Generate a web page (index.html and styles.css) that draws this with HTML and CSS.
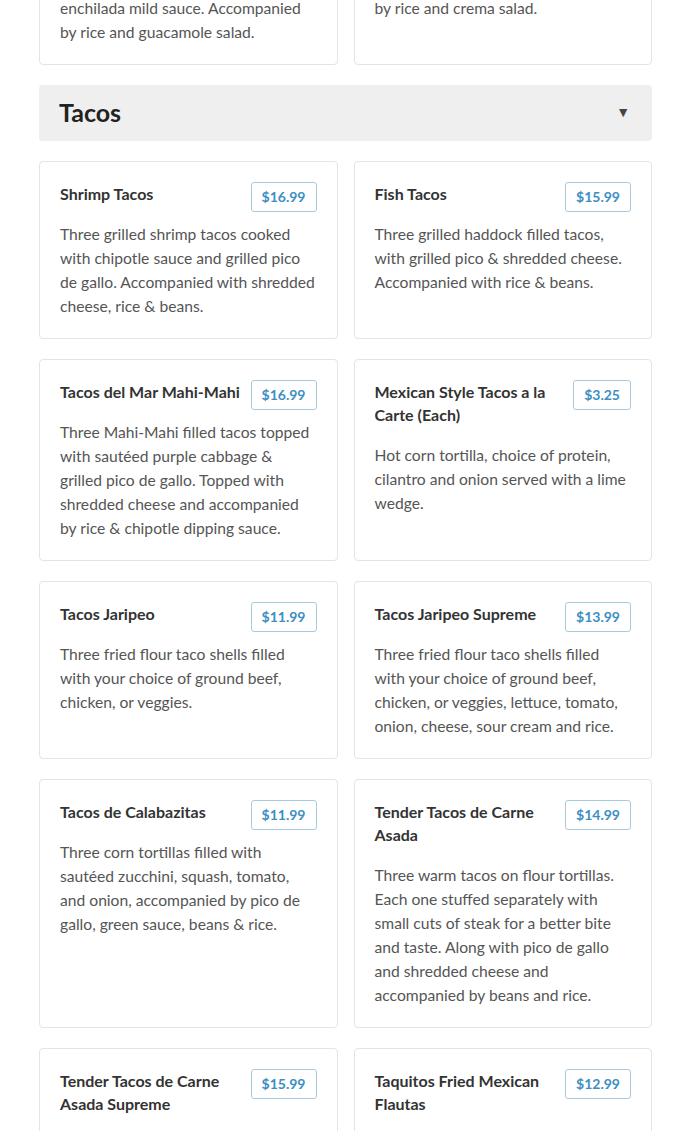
FILE: index.html
```html
<!DOCTYPE html>
<html lang="en">
<head>
<meta charset="utf-8">
<title>Menu - Tacos</title>
<link rel="stylesheet" href="styles.css">
</head>
<body>
<main class="menu">
  <section class="grid grid-first">
    <article class="card">
      <div class="card-head">
        <h3 class="card-title">Enchiladas Suizas</h3>
        <span class="price">$14.99</span>
      </div>
      <p class="card-desc">enchilada mild sauce. Accompanied by rice and guacamole salad.</p>
    </article>
    <article class="card">
      <div class="card-head">
        <h3 class="card-title">Enchiladas de Crema</h3>
        <span class="price">$14.99</span>
      </div>
      <p class="card-desc">by rice and crema salad.</p>
    </article>
  </section>

  <div class="section-head">
    <h2 class="section-title">Tacos</h2>
    <span class="caret">▼</span>
  </div>

  <section class="grid">
    <article class="card">
      <div class="card-head">
        <h3 class="card-title">Shrimp Tacos</h3>
        <span class="price">$16.99</span>
      </div>
      <p class="card-desc">Three grilled shrimp tacos cooked with chipotle sauce and grilled pico de gallo. Accompanied with shredded cheese, rice &amp; beans.</p>
    </article>
    <article class="card">
      <div class="card-head">
        <h3 class="card-title">Fish Tacos</h3>
        <span class="price">$15.99</span>
      </div>
      <p class="card-desc">Three grilled haddock filled tacos, with grilled pico &amp; shredded cheese. Accompanied with rice &amp; beans.</p>
    </article>
    <article class="card">
      <div class="card-head">
        <h3 class="card-title">Tacos del Mar Mahi-Mahi</h3>
        <span class="price">$16.99</span>
      </div>
      <p class="card-desc">Three Mahi-Mahi filled tacos topped with sautéed purple cabbage &amp; grilled pico de gallo. Topped with shredded cheese and accompanied by rice &amp; chipotle dipping sauce.</p>
    </article>
    <article class="card">
      <div class="card-head">
        <h3 class="card-title">Mexican Style Tacos a la Carte (Each)</h3>
        <span class="price">$3.25</span>
      </div>
      <p class="card-desc">Hot corn tortilla, choice of protein, cilantro and onion served with a lime wedge.</p>
    </article>
    <article class="card">
      <div class="card-head">
        <h3 class="card-title">Tacos Jaripeo</h3>
        <span class="price">$11.99</span>
      </div>
      <p class="card-desc">Three fried flour taco shells filled with your choice of ground beef, chicken, or veggies.</p>
    </article>
    <article class="card">
      <div class="card-head">
        <h3 class="card-title">Tacos Jaripeo Supreme</h3>
        <span class="price">$13.99</span>
      </div>
      <p class="card-desc">Three fried flour taco shells filled with your choice of ground beef, chicken, or veggies, lettuce, tomato, onion, cheese, sour cream and rice.</p>
    </article>
    <article class="card">
      <div class="card-head">
        <h3 class="card-title">Tacos de Calabazitas</h3>
        <span class="price">$11.99</span>
      </div>
      <p class="card-desc">Three corn tortillas filled with sautéed zucchini, squash, tomato, and onion, accompanied by pico de gallo, green sauce, beans &amp; rice.</p>
    </article>
    <article class="card">
      <div class="card-head">
        <h3 class="card-title">Tender Tacos de Carne Asada</h3>
        <span class="price">$14.99</span>
      </div>
      <p class="card-desc">Three warm tacos on flour tortillas. Each one stuffed separately with small cuts of steak for a better bite and taste. Along with pico de gallo and shredded cheese and accompanied by beans and rice.</p>
    </article>
    <article class="card">
      <div class="card-head">
        <h3 class="card-title">Tender Tacos de Carne Asada Supreme</h3>
        <span class="price">$15.99</span>
      </div>
      <p class="card-desc">Three warm tacos on flour tortillas with steak, lettuce, tomato, onion, cheese and sour cream. Accompanied by beans and rice.</p>
    </article>
    <article class="card">
      <div class="card-head">
        <h3 class="card-title">Taquitos Fried Mexican Flautas</h3>
        <span class="price">$12.99</span>
      </div>
      <p class="card-desc">Four fried rolled corn tortillas filled with chicken, topped with lettuce, sour cream and cheese. Accompanied by rice and beans.</p>
    </article>
  </section>
</main>
</body>
</html>
```

FILE: styles.css
```css
html, body {
  margin: 0;
  padding: 0;
  background: #ffffff;
}

body {
  font-family: Lato, "Open Sans", Arial, sans-serif;
  color: #333333;
  overflow: hidden;
}

.menu {
  padding: 0 38px 0 39px;
}

.grid {
  display: grid;
  grid-template-columns: 1fr 1fr;
  column-gap: 16px;
  row-gap: 20px;
}

/* page is scrolled: the previous section's cards are partly above the fold */
.grid-first {
  margin-top: -65px;
}

.card {
  border: 1px solid #e4e4e4;
  border-radius: 4px;
  padding: 20px;
  background: #ffffff;
}

.card-head {
  display: flex;
  justify-content: space-between;
  align-items: flex-start;
  gap: 10px;
  margin-bottom: 17px;
}

.card-title {
  flex: 1;
  margin: 0;
  font-size: 16px;
  line-height: 23px;
  font-weight: 700;
  color: #333333;
}

.price {
  flex: none;
  margin-bottom: -7px;
  border: 1px solid #a8c8dc;
  border-radius: 3px;
  padding: 0 10px;
  height: 28px;
  line-height: 28px;
  font-size: 14px;
  font-weight: 700;
  color: #3d8ec2;
}

.card-desc {
  margin: 0;
  font-size: 15.65px;
  line-height: 24px;
  color: #555555;
}

.section-head {
  box-sizing: border-box;
  display: flex;
  align-items: center;
  justify-content: space-between;
  height: 56px;
  margin: 20px 0;
  padding: 0 22px 3px 20px;
  background: #efefef;
  border-radius: 4px;
}

.section-title {
  margin: 0;
  font-size: 25px;
  font-weight: 700;
  color: #222222;
}

.caret {
  font-size: 14px;
  color: #444444;
}
```
